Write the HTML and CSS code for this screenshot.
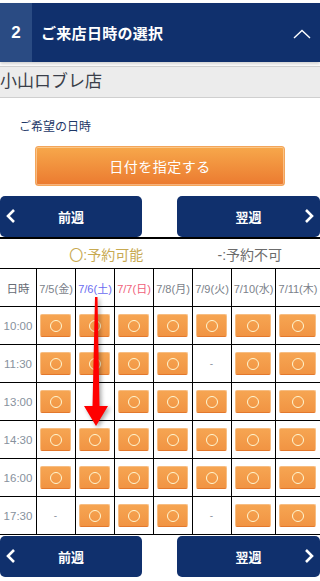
FILE: index.html
```html
<!DOCTYPE html>
<html lang="ja">
<head>
  <meta charset="UTF-8" />
  <title>ご来店日時の選択</title>
  <link rel="stylesheet" href="styles.css">
</head>
<body>
  <div class="page">
    <!-- Step header -->
    <header class="step-head">
      <div class="step-num">2</div>
      <div class="step-title">ご来店日時の選択</div>
      <svg class="step-toggle" width="18" height="10" viewBox="0 0 18 10">
        <polyline points="1,9 9,1.5 17,9" fill="none" stroke="#fff" stroke-width="1.4"/>
      </svg>
    </header>

    <div class="shop-name">小山ロブレ店</div>

    <div class="wish-label">ご希望の日時</div>

    <button class="date-btn">日付を指定する</button>

    <div class="week-nav">
      <button class="week-btn prev">
        <svg width="12" height="16" viewBox="0 0 12 16"><polyline points="9,2 3,8 9,14" fill="none" stroke="#fff" stroke-width="2.6"/></svg>
        <span>前週</span>
      </button>
      <button class="week-btn next">
        <span>翌週</span>
        <svg width="12" height="16" viewBox="0 0 12 16"><polyline points="3,2 9,8 3,14" fill="none" stroke="#fff" stroke-width="2.6"/></svg>
      </button>
    </div>

    <div class="calendar">
      <div class="legend">
        <span class="ok">〇:予約可能</span>
        <span class="ng">-:予約不可</span>
      </div>
      <div class="grid" id="grid"></div>
    </div>

    <div class="week-nav bottom">
      <button class="week-btn prev">
        <svg width="12" height="16" viewBox="0 0 12 16"><polyline points="9,2 3,8 9,14" fill="none" stroke="#fff" stroke-width="2.6"/></svg>
        <span>前週</span>
      </button>
      <button class="week-btn next">
        <span>翌週</span>
        <svg width="12" height="16" viewBox="0 0 12 16"><polyline points="3,2 9,8 3,14" fill="none" stroke="#fff" stroke-width="2.6"/></svg>
      </button>
    </div>

    <!-- red pointer arrow -->
    <svg class="pointer" width="320" height="440" viewBox="0 0 320 440">
      <polygon points="95,297 97.5,297 99.5,406 108,406 96,426 84,406 92.5,406" fill="#ff0000"/>
    </svg>
  </div>

  <script>
    const days = [
      { label: "7/5(金)", cls: "" },
      { label: "7/6(土)", cls: "sat" },
      { label: "7/7(日)", cls: "sun" },
      { label: "7/8(月)", cls: "" },
      { label: "7/9(火)", cls: "" },
      { label: "7/10(水)", cls: "" },
      { label: "7/11(木)", cls: "" }
    ];
    // 1 = 予約可能, 0 = 予約不可
    const slots = [
      ["10:00", [1, 1, 1, 1, 1, 1, 1]],
      ["11:30", [1, 1, 1, 1, 0, 1, 1]],
      ["13:00", [1, 0, 1, 1, 1, 1, 1]],
      ["14:30", [1, 1, 1, 1, 1, 1, 1]],
      ["16:00", [1, 1, 1, 1, 1, 1, 1]],
      ["17:30", [0, 1, 1, 1, 0, 1, 1]]
    ];

    const grid = document.getElementById("grid");

    function cell(cls, html) {
      const el = document.createElement("div");
      el.className = "cell " + cls;
      el.innerHTML = html;
      grid.appendChild(el);
    }

    cell("time head", "日時");
    days.forEach(d => cell("day head " + d.cls, d.label));

    slots.forEach(([time, marks]) => {
      cell("time", time);
      marks.forEach(m => {
        cell("slot", m ? '<button class="slot-btn"><i></i></button>' : '<span class="dash">-</span>');
      });
    });
  </script>
</body>
</html>
```

FILE: styles.css
```css
body {
  margin: 0;
  background: #fff;
  font-family: "Liberation Sans", "Noto Sans CJK JP", sans-serif;
}

.page {
  position: relative;
  width: 320px;
  padding-top: 3px;
}

/* step header */
.step-head {
  display: flex;
  align-items: center;
  height: 59px;
  background: #10306d;
  color: #fff;
  box-shadow: 0 2px 3px rgba(0, 0, 0, 0.18);
}

.step-num {
  width: 32px;
  height: 100%;
  display: flex;
  justify-content: center;
  align-items: center;
  background: #2a4b83;
  font-size: 17px;
  font-weight: bold;
}

.step-title {
  flex: 1;
  margin-left: 9px;
  font-size: 15px;
  font-weight: bold;
  letter-spacing: 0.3px;
}

.step-toggle { margin-right: 9px; margin-top: 2px; }

.shop-name {
  margin-top: 4px;
  height: 30px;
  line-height: 30px;
  background: #ececec;
  border-top: 1px solid #cfcfcf;
  border-bottom: 1px solid #cfcfcf;
  font-size: 17px;
  color: #3a3f4a;
}

.wish-label {
  margin: 19px 0 0 19px;
  font-size: 12px;
  color: #1d3767;
}

.date-btn {
  display: block;
  width: 250px;
  height: 40px;
  margin: 12px 0 0 35px;
  border: 1px solid #f3a55a;
  border-radius: 3px;
  background: linear-gradient(#f7a84b, #eb7a30);
  box-shadow: inset 0 0 0 1px rgba(255, 225, 190, 0.55);
  color: #fff;
  font-family: inherit;
  font-size: 14px;
  letter-spacing: 0.5px;
}

/* week navigation */
.week-nav {
  display: flex;
  justify-content: space-between;
  margin-top: 10px;
}

.week-nav.bottom { margin-top: 1px; }

.week-btn {
  position: relative;
  width: 142px;
  height: 41px;
  display: flex;
  align-items: center;
  justify-content: center;
  background: #10306d;
  border: none;
  border-radius: 5px;
  color: #fff;
  font-family: inherit;
  font-size: 13px;
  font-weight: bold;
  padding: 0;
}

.week-btn svg { position: absolute; top: 12px; }
.week-btn.prev svg { left: 5px; }
.week-btn.next svg { right: 5px; }
.week-btn.next { width: 143px; }

/* calendar */
.calendar { border-top: 2px solid #000; margin-top: 0; }

.legend {
  display: flex;
  height: 29px;
  align-items: center;
  border-bottom: 1px solid #000;
  font-size: 14px;
}

.legend span { flex: 1; text-align: center; }
.legend .ok { color: #c8aa52; padding-left: 36px; }
.legend .ng { color: #6c6c6c; padding-left: 3px; }

.grid {
  display: grid;
  grid-template-columns: 37px 39px 39px 39px 39px 39px 44px 44px;
  grid-auto-rows: 38px;
}

.cell {
  display: flex;
  align-items: center;
  justify-content: center;
  border-right: 1px solid #000;
  border-bottom: 1px solid #000;
  font-size: 11px;
  color: #7b7f8a;
  white-space: nowrap;
  overflow: hidden;
}

.cell:nth-child(8n) { border-right: none; }

.cell.time { color: #87919d; font-size: 11.5px; }
.cell.time.head { color: #666b74; }
.cell.day.sat { color: #6a6cf0; }
.cell.day.sun { color: #f0607a; }

.cell.slot { padding: 0 4px 0 3px; }

.slot-btn {
  width: 100%;
  height: 23px;
  display: flex;
  align-items: center;
  justify-content: center;
  padding: 0;
  border: 1px solid #f7bd82;
  border-bottom-color: #e3782c;
  border-radius: 2px;
  background: linear-gradient(#f6a552, #f19443);
}

.slot-btn i {
  width: 10px;
  height: 10px;
  border: 1.5px solid #fff7d2;
  border-radius: 50%;
}

.dash { color: #8d97a3; font-size: 10px; }

.pointer {
  position: absolute;
  top: 0;
  left: 0;
  pointer-events: none;
  filter: drop-shadow(2px 2px 2px rgba(0, 0, 0, 0.35));
}
```
